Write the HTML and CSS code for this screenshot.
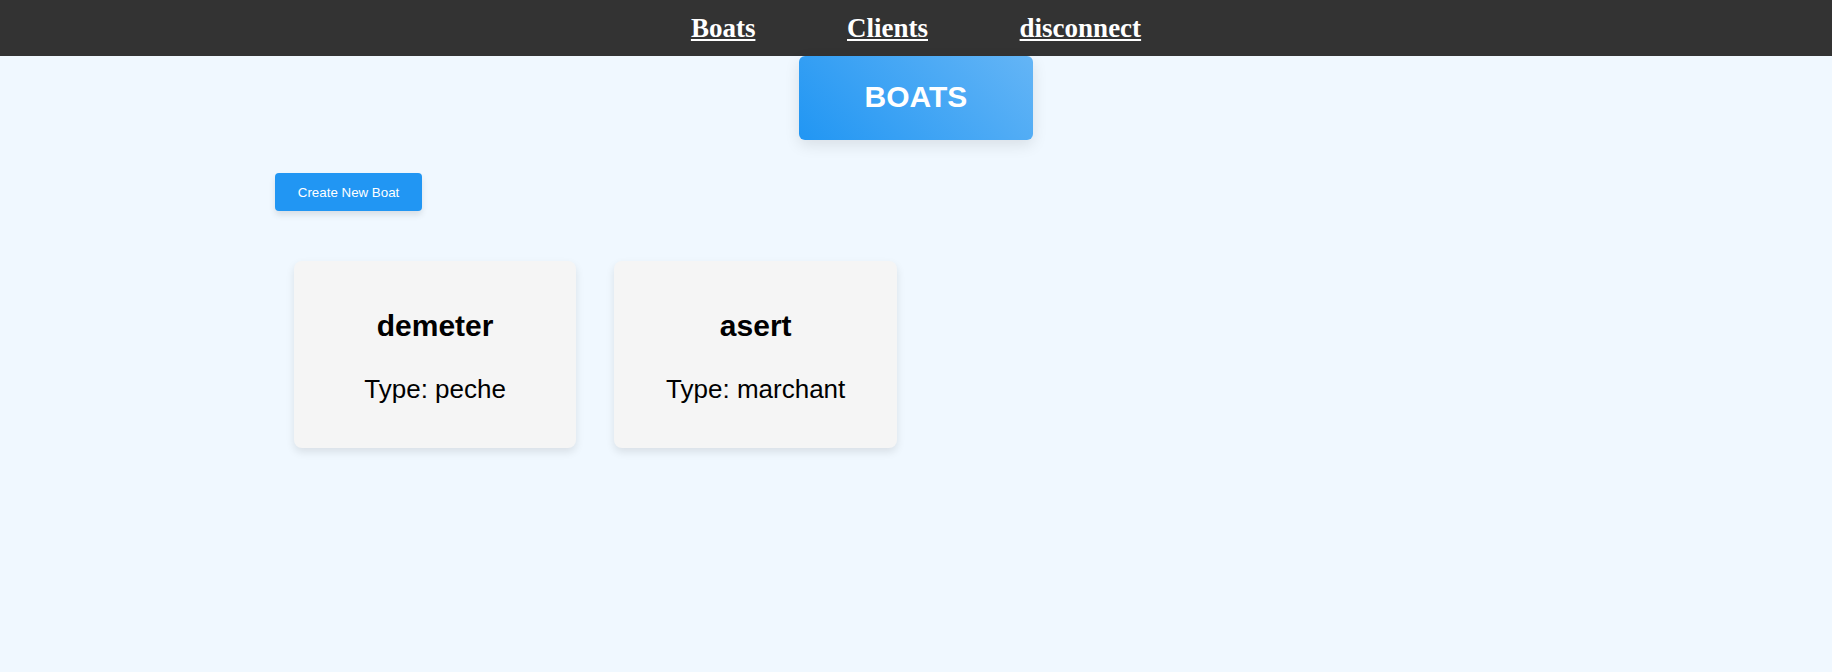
FILE: index.html
```html
<!DOCTYPE html>
<html lang="en">
<head>
<meta charset="utf-8">
<title>Boats</title>
<link rel="stylesheet" href="styles.css">
</head>
<body>
<nav class="nav">
  <a class="nav-link" href="#boats">Boats</a>
  <a class="nav-link" href="#clients">Clients</a>
  <a class="nav-link" href="#disconnect">disconnect</a>
</nav>
<main class="page">
  <h1 class="title">BOATS</h1>
  <div class="content">
    <button class="create" type="button">Create New Boat</button>
    <section class="boats">
      <article class="card">
        <h2 class="card-name">demeter</h2>
        <p class="card-type">Type: peche</p>
      </article>
      <article class="card">
        <h2 class="card-name">asert</h2>
        <p class="card-type">Type: marchant</p>
      </article>
    </section>
  </div>
</main>
</body>
</html>
```
FILE: styles.css
```css
body {
  margin: 0;
  background: #f0f8ff;
  font-family: "Liberation Sans", Arial, sans-serif;
}

.nav {
  display: flex;
  justify-content: center;
  gap: 5vw;
  padding: 12px 0;
  background: #333;
}

.nav-link {
  color: #fff;
  font-family: "Liberation Serif", "Times New Roman", serif;
  font-size: 27px;
  font-weight: bold;
  line-height: 32px;
}

.page {
  display: flex;
  flex-direction: column;
  align-items: center;
}

.title {
  margin: 0;
  padding: 24px 66px 26px;
  border-radius: 6px;
  background: linear-gradient(45deg, #2196f3, #64b5f6);
  box-shadow: 0 5px 15px rgba(0, 0, 0, 0.1);
  color: #fff;
  font-size: 30px;
  line-height: 34px;
}

.content {
  width: 70%;
  padding-top: 33px;
}

.create {
  display: block;
  padding: 12px 23px 11px;
  border: 0;
  border-radius: 4px;
  background: #2196f3;
  box-shadow: 0 4px 6px rgba(0, 0, 0, 0.1);
  color: #fff;
  font-family: inherit;
  line-height: 15px;
}

.boats {
  display: grid;
  grid-template-columns: repeat(4, 1fr);
  gap: 38px;
  padding: 50px 19px;
}

.card {
  padding: 18px;
  border-radius: 8px;
  background: #f5f5f5;
  box-shadow: 0 4px 8px rgba(0, 0, 0, 0.1);
  color: #000;
  text-align: center;
}

.card-name {
  margin: 30px 0 32px;
  font-size: 30px;
  line-height: 33px;
}

.card-type {
  margin: 26px 0;
  font-size: 26px;
  line-height: 30px;
}
```
